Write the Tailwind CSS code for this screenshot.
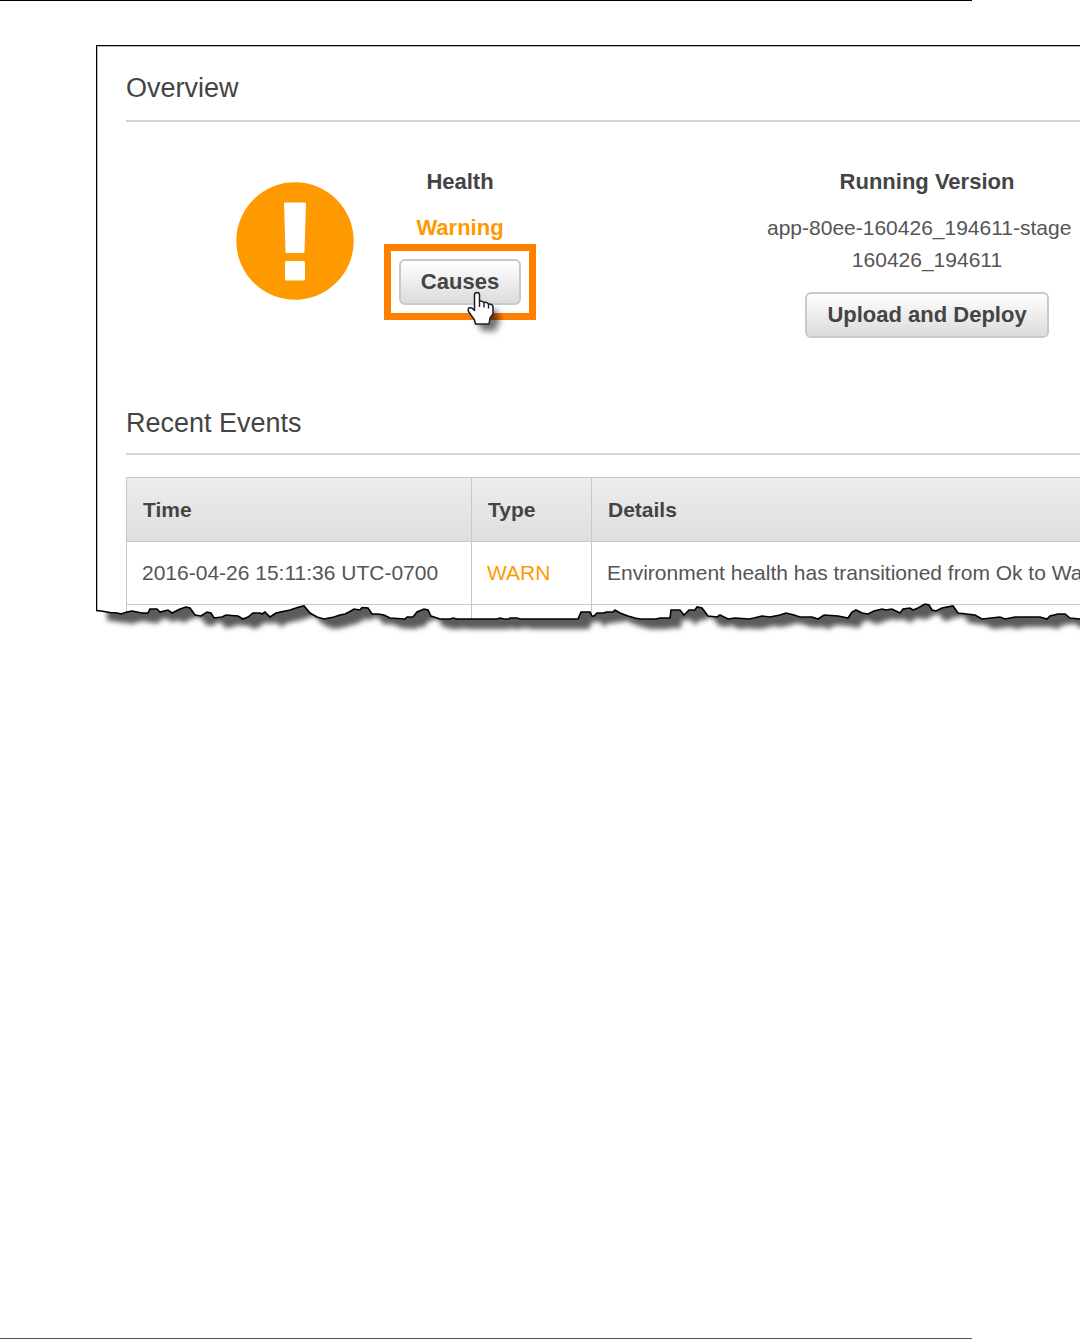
<!DOCTYPE html>
<html lang="en">

<head>
    <meta charset="UTF-8">
    <meta name="viewport" content="width=device-width, initial-scale=1.0">
    <title>Environment Overview</title>
    <script src="https://cdn.jsdelivr.net/npm/@tailwindcss/browser@4"></script>
</head>

<body class="bg-white font-['Liberation_Sans',Arial,sans-serif] text-[21px] leading-8 text-[#555]">
    <div class="min-h-screen flex flex-col overflow-hidden">
        <hr class="w-9/10 border-t border-black">

        <main class="relative mt-11 ml-24 border-t border-l border-black pb-5">
            <div class="border-t border-l border-[#bbb] pl-7">
                <section>
                    <h2 class="pt-[25px] pb-4 text-[27px] leading-8 text-[#444] border-b-2 border-[#d4d4d4]">Overview</h2>

                    <div class="flex items-start pl-[110px] pt-11">
                        <svg class="w-[118px] h-[118px] mt-4 shrink-0" viewBox="0 0 118 118" role="img" aria-label="Warning">
                            <circle cx="59" cy="59" r="58.7" fill="#ff9900" />
                            <path d="M49 20.5H69Q70 20.5 70 21.5L68.500 70Q68.500 71 67.500 71H50.500Q49.500 71 49.500 70L48 21.500Q48 20.500 49 20.500Z" fill="#fff" />
                            <rect x="49" y="79" width="20" height="19.500" rx="1.500" fill="#fff" />
                        </svg>

                        <div class="ml-[30px] w-[152px] shrink-0 text-center font-bold">
                            <h3 class="text-[22px] text-[#444]">Health</h3>
                            <p class="mt-[14px] text-[22px] text-[#ff9900]">Warning</p>
                            <div class="relative border-7 border-[#ff8000] p-2">
                                <button type="button"
                                    class="block w-full h-[46px] rounded-md border-2 border-[#c9c9c9] bg-linear-to-b from-white to-[#dcdcdc] text-[22px] leading-10 text-[#444]">Causes</button>
                                <!-- hand pointer -->
                                <svg class="absolute left-[71px] top-[36px] w-[50px] h-[60px]" viewBox="462 288 50 60" aria-hidden="true">
                                    <defs>
                                        <filter id="soft" x="-50%" y="-50%" width="200%" height="200%">
                                            <feGaussianBlur stdDeviation="3" />
                                        </filter>
                                    </defs>
                                    <path d="M482 307L497 312L500 320L496 332L482 332L476 320Z" fill="#000" fill-opacity=".55" filter="url(#soft)" />
                                    <path d="M474.500 311.500V296Q474.500 293.500 477 293.500Q479.500 293.500 479.500 296V302Q482 301.500 484 303.500Q486.500 302.500 488.500 305Q492.500 304.500 493 308V315L490 319L489 325H475.500L474.500 321L468.500 312.500Q467.500 309 470 308.500Q472 308.500 474.500 311.500Z"
                                        fill="#fff" stroke="#1c1c2c" stroke-width="1.500" stroke-linejoin="round" />
                                    <path d="M479.500 302V308M484 303.500V308.500M488.500 305V309.500" fill="none" stroke="#1c1c2c" stroke-width="1.400" />
                                </svg>
                            </div>
                        </div>

                        <div class="ml-[231px] w-[320px] shrink-0 text-center">
                            <h3 class="text-[22px] font-bold text-[#444]">Running Version</h3>
                            <p class="mt-[14px] whitespace-nowrap">
                                <span class="block text-left">app-80ee-160426_194611-stage</span>
                                <span class="block">160426_194611</span>
                            </p>
                            <button type="button"
                                class="mt-4 h-[46px] rounded-md border-2 border-[#c9c9c9] bg-linear-to-b from-white to-[#dcdcdc] px-5 text-[22px] font-bold text-[#444]">Upload and Deploy</button>
                        </div>
                    </div>
                </section>

                <section class="pt-[69px]">
                    <h2 class="pb-[14px] text-[27px] leading-8 text-[#444] border-b-2 border-[#d4d4d4]">Recent Events</h2>

                    <!-- the last column runs off the right side -->
                    <div class="mt-[22px] -mr-5">
                        <table class="w-full table-fixed border-collapse text-left whitespace-nowrap">
                            <thead>
                                <tr class="h-16 bg-linear-to-b from-[#ededed] to-[#dedede] text-[#444]">
                                    <th class="w-[345px] border border-[#c8c8c8] px-4">Time</th>
                                    <th class="w-[120px] border border-[#c8c8c8] px-4">Type</th>
                                    <th class="border border-[#c8c8c8] px-4">Details</th>
                                </tr>
                            </thead>
                            <tbody>
                                <tr class="h-[63px]">
                                    <td class="border border-[#c8c8c8] px-[15px]">2016-04-26 15:11:36 UTC-0700</td>
                                    <td class="border border-[#c8c8c8] px-[15px] text-[#ff9900]">WARN</td>
                                    <td class="border border-[#c8c8c8] px-[15px]">Environment health has transitioned from Ok to Wa</td>
                                </tr>
                                <tr class="h-4">
                                    <td class="border-x border-[#c8c8c8]"></td>
                                    <td class="border-x border-[#c8c8c8]"></td>
                                    <td class="border-x border-[#c8c8c8]"></td>
                                </tr>
                            </tbody>
                        </table>
                    </div>
                </section>
            </div>

            <!-- torn paper edge -->
            <svg class="absolute -left-px bottom-0 w-[984px] h-[45px]" viewBox="96 595 984 45" aria-hidden="true">
                <defs>
                    <clipPath id="under">
                        <path id="below" />
                    </clipPath>
                    <filter id="shade" filterUnits="userSpaceOnUse" x="80" y="570" width="1040" height="90">
                        <feGaussianBlur stdDeviation="2.500" />
                    </filter>
                </defs>
                <g clip-path="url(#under)">
                    <rect x="96" y="595" width="984" height="45" fill="#fff" />
                    <g filter="url(#shade)">
                        <path id="shadow" fill="#5c5c5c" transform="translate(11 10)" />
                    </g>
                </g>
                <path id="edge" fill="none" stroke="#000" stroke-width="1.600" />
            </svg>
        </main>

        <hr class="mt-auto w-9/10 border-t border-[#555]">
    </div>

    <script>
        const points = `96,609.5 101,610 110,611.5 117,612 121,613 127,611 132,610 142,612 148,612 150,608 157,608 160,611
            168,609 172,612 180,608 186,606 190,607 195,614 201,615 207,611 211,612 214,617 222,616 226,614 238,615 243,618
            248,616 253,612 260,612 262,613 265,611 270,616 276,612 290,609 299,606 304,605 310,612 317,616 324,618 334,616
            340,614 345,613 349,611 354,608 360,609 362,606.5 368,607 372,613 378,613 384,614 390,617 405,618 407,616
            413,616 417,611 424,608 428,609 431,615 440,618 450,618 453,617 457,618 497,618 500,617 504,618 509,618
            510,617 517,617 520,618 578,618 581,611 590,611 592,615 594,615 597,612 604,612 606,611 613,611 615,609
            620,612 628,615 635,617 640,618 656,618 660,617 670,617 671,609 680,609 684,614 689,609 695,609 697,606
            702,607 708,615 717,616 720,614 724,616 728,618 735,617 749,618 754,617 762,615 770,616 780,614 786,612
            794,614 800,616 812,616 818,618 824,614 838,615 848,617 852,611 856,609 862,612 868,613 874,610 882,608
            886,609 892,608 900,612 903,608 910,607 913,609 918,607 925,603 929,604 932,609 936,610 942,607 953,605
            958,612 975,614 982,618 1000,616 1005,618 1015,616 1040,616 1047,618 1050,615 1058,613 1065,613 1070,617
            1080,618`.trim().split(/\s+/).join(" L");

        document.getElementById("edge").setAttribute("d", `M${points}`);
        document.getElementById("below").setAttribute("d", `M${points} V640 H96 Z`);
        document.getElementById("shadow").setAttribute("d", `M96,580 L${points} V580 Z`);
    </script>
</body>

</html>
